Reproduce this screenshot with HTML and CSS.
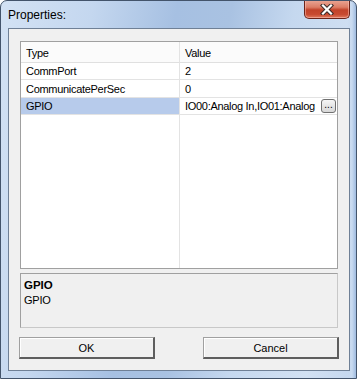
FILE: index.html
```html
<!DOCTYPE html>
<html>
<head>
<meta charset="utf-8">
<link rel="stylesheet" href="styles.css">
</head>
<body>
<div class="window">
  <div class="titlebar">
    <span class="title">Properties:</span>
    <div class="close">
      <svg width="16" height="11" viewBox="0 0 16 11">
        <path d="M4 1.5 L12 9.5 M12 1.5 L4 9.5" stroke="#3a2a28" stroke-width="4.2" stroke-linecap="square" fill="none"/>
        <path d="M4 1.5 L12 9.5 M12 1.5 L4 9.5" stroke="#ffffff" stroke-width="2.2" stroke-linecap="square" fill="none"/>
      </svg>
    </div>
  </div>
  <div class="client">
    <div class="grid">
      <div class="cell head c1">Type</div>
      <div class="cell head c2">Value</div>
      <div class="cell c1">CommPort</div>
      <div class="cell c2">2</div>
      <div class="cell c1">CommunicatePerSec</div>
      <div class="cell c2">0</div>
      <div class="cell c1 sel">GPIO</div>
      <div class="cell c2 val"><span>IO00:Analog In,IO01:Analog</span><span class="dots">...</span></div>
      <div class="fill c1"></div>
      <div class="fill c2"></div>
    </div>
    <div class="desc">
      <div class="desc-title">GPIO</div>
      <div class="desc-text">GPIO</div>
    </div>
    <div class="buttons">
      <div class="btn">OK</div>
      <div class="btn">Cancel</div>
    </div>
  </div>
</div>
</body>
</html>
```
FILE: styles.css
```css
html, body {
  margin: 0;
  padding: 0;
  background: #ffffff;
}
.window {
  width: 357px;
  height: 379px;
  box-sizing: border-box;
  border: 1px solid #43546b;
  border-radius: 7px 7px 0 0;
  background:
    linear-gradient(to left, #9fbbe0 0, #c8daf0 4px, rgba(200,218,240,0) 9px),
    linear-gradient(100deg, #d3e2f4 0%, #c4d7ef 22%, #a6c0e2 42%, #a9c2e2 55%, #c5d8ef 70%, #d2e1f3 88%, #c3d6ee 100%);
  display: flex;
  flex-direction: column;
  font-family: "Liberation Sans", Arial, sans-serif;
  overflow: hidden;
}
.titlebar {
  height: 27px;
  display: flex;
  align-items: center;
  padding-left: 7px;
  flex: none;
}
.title {
  font-size: 12px;
  color: #000;
  margin-top: 1px;
}
.close {
  margin-left: auto;
  margin-right: 6px;
  align-self: flex-start;
  margin-top: -1px;
  width: 46px;
  height: 19px;
  box-sizing: border-box;
  border: 1px solid #6b241a;
  border-top: none;
  border-radius: 0 0 5px 5px;
  background: linear-gradient(to bottom, #eaa897 0%, #dc7d66 40%, #c2432a 55%, #c84a30 80%, #e07a5e 100%);
  box-shadow: inset 0 0 0 1px rgba(255,200,190,0.5);
  display: flex;
  align-items: center;
  justify-content: center;
}
.client {
  margin: 0 6px 0 7px;
  width: 342px;
  height: 343px;
  box-sizing: border-box;
  border: 1px solid #6f8096;
  background: #f0f0f0;
  display: flex;
  flex-direction: column;
  flex: none;
}
.grid {
  margin: 12px 0 0 11px;
  width: 318px;
  height: 228px;
  box-sizing: border-box;
  border: 1px solid #a0a0a0;
  background: #ffffff;
  display: grid;
  grid-template-columns: 159px 1fr;
  grid-template-rows: 21px 17px 18px 17px 1fr;
  font-size: 11px;
  letter-spacing: -0.3px;
  color: #000;
}
.cell {
  box-sizing: border-box;
  border-bottom: 1px solid #e3e3e3;
  display: flex;
  align-items: center;
  padding-left: 5px;
  white-space: nowrap;
  overflow: hidden;
}
.c1 {
  border-right: 1px solid #e3e3e3;
}
.head {
  background: #fbfbfb;
  border-bottom-color: #e0e0e0;
  padding-top: 1px;
}
.sel {
  background: #b7cbeb;
}
.val {
  padding-right: 1px;
}
.dots {
  margin-left: auto;
  width: 15px;
  height: 14px;
  box-sizing: border-box;
  border: 1px solid #707070;
  border-radius: 3px;
  background: linear-gradient(to bottom, #f6f6f6 0%, #e6e6e6 50%, #d8d8d8 100%);
  font-size: 10px;
  letter-spacing: 0;
  line-height: 9px;
  text-align: center;
  color: #000;
}
.fill {
  box-sizing: border-box;
}
.desc {
  margin: 4px 0 0 11px;
  width: 318px;
  height: 55px;
  box-sizing: border-box;
  border: 1px solid #a0a0a0;
  border-right-color: #c8c8c8;
  border-bottom-color: #c8c8c8;
  background: #f0f0f0;
  padding: 4px 0 0 3px;
  font-size: 11px;
  letter-spacing: -0.2px;
  line-height: 15px;
  color: #000;
}
.desc-title {
  font-weight: bold;
  font-size: 11.5px;
  letter-spacing: 0;
}
.buttons {
  margin-top: 9px;
  padding: 0 10px;
  display: flex;
  justify-content: space-between;
}
.btn {
  width: 136px;
  height: 22px;
  box-sizing: border-box;
  border-top: 1px solid #a0a0a0;
  border-left: 1px solid #a0a0a0;
  border-right: 2px solid #5e5e5e;
  border-bottom: 2px solid #5e5e5e;
  box-shadow: inset 1px 1px 0 #ffffff;
  background: #f0f0f0;
  display: flex;
  align-items: center;
  justify-content: center;
  font-size: 11px;
  color: #000;
  padding-top: 1px;
}
```
